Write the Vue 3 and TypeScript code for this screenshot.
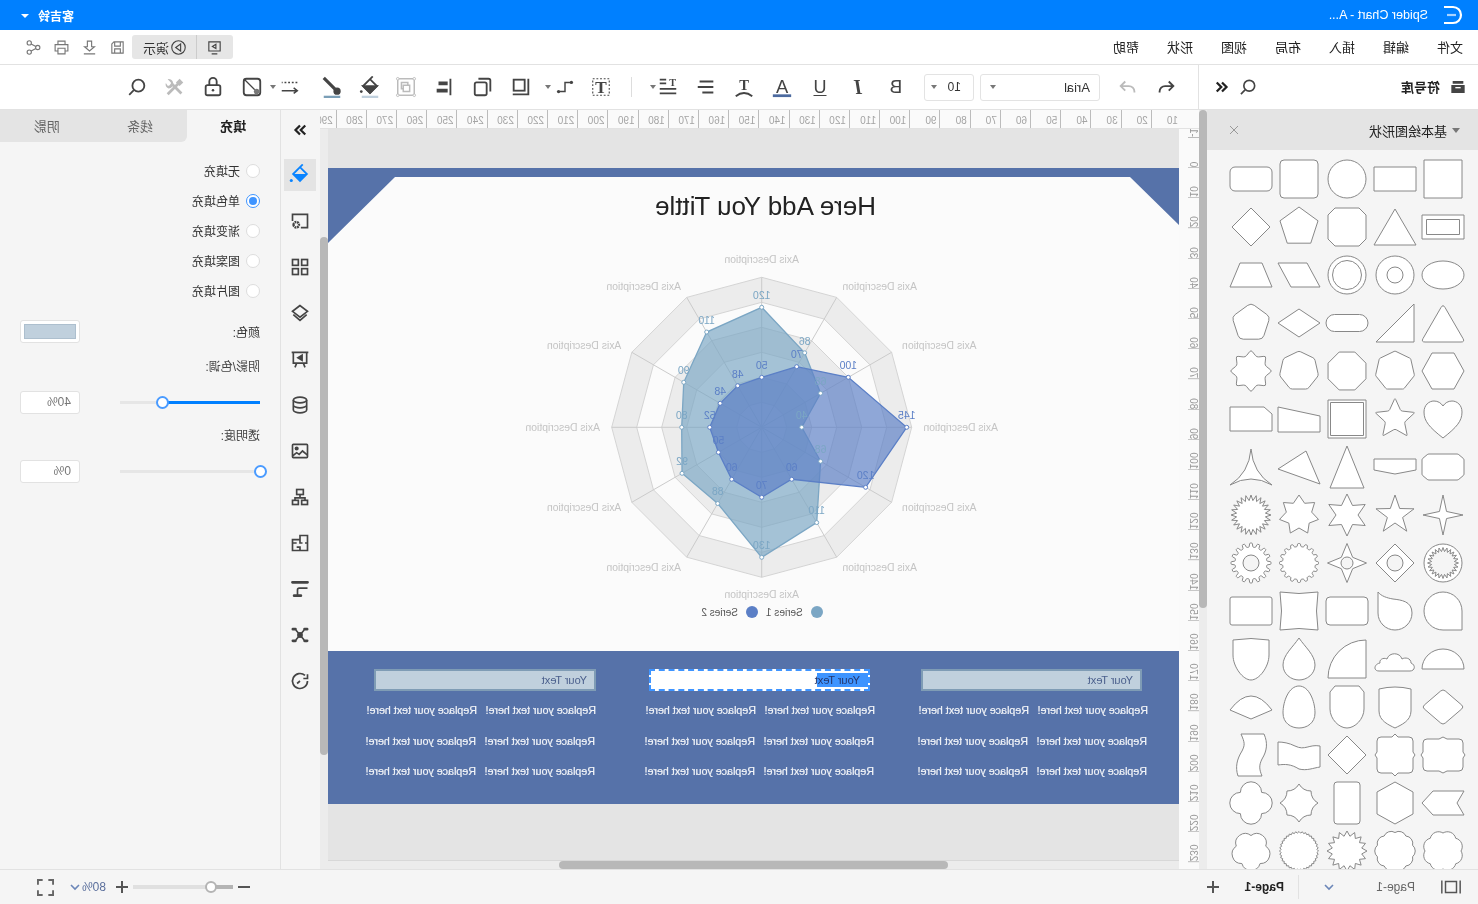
<script setup lang="ts">
import { computed } from 'vue'

// the reference is a flipped capture, so the whole app is laid out normally and flipped in css
type Pt = [number, number]

const f = (n: number) => Math.round(n * 100) / 100
const poly = (pts: Pt[]) => 'M' + pts.map(p => `${f(p[0])} ${f(p[1])}`).join('L') + 'Z'
const rect = (w: number, h: number, r = 0) => {
  const x = 24 - w / 2, y = 24 - h / 2
  if (!r) return `M${x} ${y}h${w}v${h}h${-w}Z`
  return `M${x + r} ${y}h${w - 2 * r}a${r} ${r} 0 0 1 ${r} ${r}v${h - 2 * r}a${r} ${r} 0 0 1 ${-r} ${r}h${2 * r - w}a${r} ${r} 0 0 1 ${-r} ${-r}v${2 * r - h}a${r} ${r} 0 0 1 ${r} ${-r}Z`
}
const ell = (rx: number, ry = rx) => `M${24 - rx} 24a${rx} ${ry} 0 1 0 ${2 * rx} 0a${rx} ${ry} 0 1 0 ${-2 * rx} 0Z`
const ngonPts = (n: number, r: number, rot = 0): Pt[] =>
  Array.from({ length: n }, (_, i) => {
    const a = ((rot + (360 * i) / n - 90) * Math.PI) / 180
    return [24 + r * Math.cos(a), 24 + r * Math.sin(a)] as Pt
  })
const ngon = (n: number, r: number, rot = 0) => poly(ngonPts(n, r, rot))
const starPts = (n: number, a: number, b: number): Pt[] =>
  Array.from({ length: n * 2 }, (_, i) => {
    const t = (Math.PI * i) / n - Math.PI / 2
    const r = i % 2 ? b : a
    return [24 + r * Math.cos(t), 24 + r * Math.sin(t)] as Pt
  })
const star = (n: number, a: number, b: number) => poly(starPts(n, a, b))
const roundPoly = (pts: Pt[], r: number) => {
  let d = ''
  pts.forEach((p, i) => {
    const a = pts[(i + pts.length - 1) % pts.length], b = pts[(i + 1) % pts.length]
    const la = Math.hypot(a[0] - p[0], a[1] - p[1]), lb = Math.hypot(b[0] - p[0], b[1] - p[1])
    const s: Pt = [p[0] + ((a[0] - p[0]) * r) / la, p[1] + ((a[1] - p[1]) * r) / la]
    const e: Pt = [p[0] + ((b[0] - p[0]) * r) / lb, p[1] + ((b[1] - p[1]) * r) / lb]
    d += `${i ? 'L' : 'M'}${f(s[0])} ${f(s[1])}Q${f(p[0])} ${f(p[1])} ${f(e[0])} ${f(e[1])}`
  })
  return d + 'Z'
}
const gear = (n: number, a: number, b: number) => {
  const pts: Pt[] = []
  for (let i = 0; i < n; i++) {
    const s = (2 * Math.PI) / n, t = s * i - Math.PI / 2
    for (const [k, r] of [[-0.3, b], [-0.16, a], [0.16, a], [0.3, b]] as Pt[]) {
      pts.push([24 + r * Math.cos(t + k * s), 24 + r * Math.sin(t + k * s)])
    }
  }
  return roundPoly(pts, 0.6)
}
const flower = (n: number, r: number, lobe: number, rot = 0) => {
  const pts = ngonPts(n, r, rot)
  return `M${f(pts[0][0])} ${f(pts[0][1])}` + pts.map((_, i) => {
    const p = pts[(i + 1) % n]
    return `A${lobe} ${lobe} 0 0 1 ${f(p[0])} ${f(p[1])}`
  }).join('') + 'Z'
}

const shapes: string[] = [
  rect(38, 38), rect(42, 24), ell(19), rect(38, 38, 4), rect(42, 24, 5),
  rect(42, 24) + rect(33, 15), poly([[24, 6], [45, 42], [3, 42]]), poly([[12, 5], [36, 5], [43, 12], [43, 36], [36, 43], [12, 43], [5, 36], [5, 12]]), ngon(5, 20), poly([[24, 5], [43, 24], [24, 43], [5, 24]]),
  ell(21, 14), ell(19) + ell(8), ell(19) + ell(14.5), poly([[16, 12], [45, 12], [32, 36], [3, 36]]), poly([[13, 12], [35, 12], [45, 36], [3, 36]]),
  roundPoly([[24, 5], [46, 43], [2, 43]], 4), poly([[5, 5], [5, 43], [43, 43]]), rect(42, 17, 8.5), poly([[24, 10], [45, 24], [24, 38], [3, 24]]), roundPoly(ngonPts(5, 20), 4),
  poly([[13, 6], [35, 6], [45, 24], [35, 42], [13, 42], [3, 24]]), roundPoly(ngonPts(7, 20), 1), ngon(8, 20.5, 22.5), roundPoly(ngonPts(7, 20), 2), roundPoly(starPts(8, 21, 15), 2),
  'M24 43C10 32 5 26 5 17C5 10 10 6 15 6C19 6 22 8 24 11C26 8 29 6 33 6C38 6 43 10 43 17C43 26 38 32 24 43Z', roundPoly(starPts(5, 21, 10), 1.5), rect(38, 38) + rect(33, 33), poly([[3, 21], [45, 12], [45, 37], [3, 37]]), poly([[3, 19], [11, 12], [45, 12], [45, 36], [3, 36]]),
  roundPoly([[9, 11], [39, 11], [45, 16], [45, 32], [39, 37], [9, 37], [3, 32], [3, 16]], 1), poly([[3, 16], [45, 16], [45, 27], [24, 31], [3, 27]]), poly([[24, 3], [41, 45], [7, 45]]), poly([[45, 26], [17, 8], [3, 41]]), 'M24 6Q26 30 45 42Q24 30 3 42Q22 30 24 6Z',
  star(4, 20, 5), star(5, 20, 8), star(6, 21, 11), star(7, 20, 13), star(24, 20, 14.5),
  ell(19) + star(24, 15.5, 11.5), poly([[24, 5], [43, 24], [24, 43], [5, 24]]) + ell(8), star(4, 19.5, 8) + ell(6), gear(16, 19.5, 16.5), gear(16, 20, 16) + ell(8),
  'M5 43V24A19 19 0 1 1 24 43Z', 'M41 5V26A17 17 0 1 1 7 26C7 14 18 13 26 12C32 11 38 9 41 5Z', rect(42, 28, 4), 'M5 5Q24 8 43 5Q40 24 43 43Q24 40 5 43Q8 24 5 5Z', rect(42, 28, 2),
  'M3 34A21 20 0 0 1 45 34Z', 'M9 36C4 36 3 30 8 28C8 23 14 22 17 24C19 17 30 17 32 24C36 22 40 25 39 28C45 29 46 36 40 36Z', 'M5 43V5A38 38 0 0 1 43 43Z', 'M24 3C30 12 40 20 40 30C40 39 32 45 24 45C16 45 8 39 8 30C8 20 18 12 24 3Z', 'M6 5Q24 2 42 5V20C42 32 32 45 24 45C16 45 6 32 6 20Z',
  roundPoly([[24, 6], [45, 24], [24, 42], [3, 24]], 3), 'M8 6Q24 2 40 6V28C40 38 30 42 24 45C18 42 8 38 8 28Z', 'M12 3H36L41 9V26C41 36 32 45 24 45C16 45 7 36 7 26V9Z', 'M24 3C34 3 40 18 40 30C40 40 32 45 24 45C16 45 8 40 8 30C8 18 14 3 24 3Z', 'M3 27Q24 -1 45 27L24 36Z',
  'M8 8H20L24 6L28 8H40Q44 8 44 12V21L46 24L44 27V36Q44 40 40 40H28L24 42L20 40H8Q4 40 4 36V27L2 24L4 21V12Q4 8 8 8Z', 'M10 6H21L24 3L27 6H38Q42 6 42 10V21L44 24L42 27V38Q42 42 38 42H27L24 45L21 42H10Q6 42 6 38V27L4 24L6 21V10Q6 6 10 6Z', poly([[24, 5], [43, 24], [24, 43], [5, 24]]), 'M3 15C14 13 18 20 28 15C34 12 40 11 45 11V34C38 33 32 33 24 38C16 40 10 37 3 36Z', 'M11 3H34C30 12 30 14 33 20C38 28 40 36 37 45H13C16 38 16 34 13 28C8 20 7 12 11 3Z',
  poly([[45, 24], [34, 12], [3, 12], [10, 24], [3, 36], [34, 36]]), poly([[24, 3], [42, 13], [42, 35], [24, 45], [6, 35], [6, 13]]), rect(26, 42, 3), 'M24 5Q28 12 36 12Q36 20 43 24Q36 28 36 36Q28 36 24 43Q20 36 12 36Q12 28 5 24Q12 20 12 12Q20 12 24 5Z', flower(4, 15, 9.5, 45),
  flower(8, 18, 8.5), flower(10, 18.5, 7.5), star(16, 20, 15), star(36, 19.5, 18), flower(5, 15.5, 9.5),
]

const hTicks = Array.from({ length: 29 }, (_, i) => (i + 1) * 10)
const vTicks = Array.from({ length: 24 }, (_, i) => i * 10)

// chart geometry, one value unit is one pixel
const cx = 417.3
const cy = 203.3
const axisN = 12
const pt = (i: number, r: number): Pt => {
  const a = (i * 2 * Math.PI) / axisN
  return [cx - r * Math.sin(a), cy - r * Math.cos(a)]
}
const ring = (r: number) => Array.from({ length: axisN }, (_, i) => pt(i, r).map(f).join(',')).join(' ')
const rings = [150, 125, 100, 75, 50, 25].map((r, i) => ({ r, pts: ring(r), fill: i % 2 ? '#fbfbfb' : '#ececec' }))
const spokes = Array.from({ length: axisN }, (_, i) => pt(i, 150))
const axisLabels: { x: number; y: number }[] = [
  [0, -167], [118, -140], [177.6, -80.6], [199, 1], [177.6, 81.4], [118, 141.4],
  [0, 168], [-118, 141.4], [-177.6, 81.4], [-199, 1], [-177.6, -80.6], [-118, -140],
].map(([dx, dy]) => ({ x: cx - dx, y: cy + dy }))

const seriesData = [
  { name: 'Series 1', color: '#7ba6c4', values: [120, 86, 68, 40, 68, 110, 130, 88, 92, 80, 90, 110] },
  { name: 'Series 2', color: '#5b7fc6', values: [50, 70, 100, 145, 120, 60, 70, 60, 50, 52, 48, 48] },
]
const series = computed(() =>
  seriesData.map(s => {
    const points = s.values.map((v, i) => {
      const [x, y] = pt(i, v)
      return { x, y, v }
    })
    return { ...s, points, path: points.map(p => `${f(p.x)},${f(p.y)}`).join(' ') }
  })
)

const fills = [
  { label: '无填充', on: false },
  { label: '单色填充', on: true },
  { label: '渐变填充', on: false },
  { label: '图案填充', on: false },
  { label: '图片填充', on: false },
]
const menus = ['文件', '编辑', '插入', '布局', '视图', '形状', '帮助']
const blocks = [
  { cls: 'blk-a', selected: false },
  { cls: 'blk-b', selected: true },
  { cls: 'blk-c', selected: false },
]
const placeholder = 'Replace your text here!'
</script>

<template>
  <div class="app">
    <header class="titlebar">
      <svg class="logo" viewBox="0 0 20 20"><path d="M19 2H10a8 8 0 0 0 0 16h9" /><path d="M7 10h9" class="logo-mid" /></svg>
      <span class="doc-title">Spider Chart - A...</span>
      <span class="user">客吉铃</span>
      <i class="user-caret"></i>
    </header>

    <nav class="menubar">
      <span v-for="m in menus" :key="m" class="menu">{{ m }}</span>
      <div class="pill">
        <span class="pill-a">
          <svg class="ic ic-s" viewBox="0 0 24 24"><path d="M4 4h16v13H4zM8 21h8" /><path d="M10 7.5l5 3-5 3z" /></svg>
        </span>
        <span class="pill-b">
          <svg class="ic ic-s" viewBox="0 0 24 24"><circle cx="12" cy="12" r="9.5" /><path d="M9 7l7 5-7 5z" /></svg>
          演示
        </span>
      </div>
      <span class="mini"><svg class="ic ic-s grey" viewBox="0 0 24 24"><path d="M4 4h13l3 3v13H4zM8 4v6h8V4M8 20v-6h8v6" /></svg></span>
      <span class="mini"><svg class="ic ic-s grey" viewBox="0 0 24 24"><path d="M9 3h6v8h4l-7 6-7-6h4zM4 21h16" /></svg></span>
      <span class="mini"><svg class="ic ic-s grey" viewBox="0 0 24 24"><path d="M7 8V3h10v5M7 17H3V8h18v9h-4M7 13h10v8H7z" /></svg></span>
      <span class="mini"><svg class="ic ic-s grey" viewBox="0 0 24 24"><circle cx="6" cy="12" r="3" /><circle cx="18" cy="5.5" r="3" /><circle cx="18" cy="18.5" r="3" /><path d="M8.7 10.6l6.6-3.7M8.7 13.4l6.6 3.7" /></svg></span>
    </nav>

    <div class="toolbar">
      <div class="lib-head">
        <svg class="solid lib-ic" viewBox="0 0 24 24"><path d="M4 3h16v4H4zM2 9h20v12H2z" /><path d="M8 12h8v2H8z" fill="#fff" /></svg>
        <b class="lib-title">符号库</b>
        <svg class="ic search-a" viewBox="0 0 24 24"><circle cx="10.5" cy="10.5" r="6.5" /><path d="M15.5 15.5l5 5" /></svg>
        <svg class="ic dbl" viewBox="0 0 24 24"><path d="M12 6l-6 6 6 6M19 6l-6 6 6 6" /></svg>
      </div>
      <span class="tb undo"><svg class="ic" viewBox="0 0 24 24"><path d="M9 6l-5 5 5 5M4 11h9a6 6 0 0 1 6 6v1" /></svg></span>
      <span class="tb"><svg class="ic light" viewBox="0 0 24 24"><path d="M15 6l5 5-5 5M20 11h-9a6 6 0 0 0-6 6v1" /></svg></span>
      <div class="select font-sel"><span>Arial</span><i class="caret"></i></div>
      <div class="select size-sel"><span>10</span><i class="caret"></i></div>
      <span class="tb glyph bold-b">B</span>
      <span class="tb glyph ital">I</span>
      <span class="tb glyph under">U</span>
      <span class="tb">
        <svg class="ic" viewBox="0 0 24 24"><text x="12" y="18" class="svg-t sans">A</text><path d="M2 21.5h20" class="line-blue" /></svg>
      </span>
      <span class="tb">
        <svg class="ic" viewBox="0 0 24 24"><text x="12" y="15" class="svg-t slab">T</text><path d="M3 22q9-7 18 0" /></svg>
      </span>
      <span class="tb"><svg class="ic" viewBox="0 0 24 24"><path d="M4 6h15M4 12h17M4 18h12" /></svg></span>
      <span class="tb">
        <svg class="ic" viewBox="0 0 24 24"><text x="7" y="11" class="svg-t slab-s">T</text><path d="M14 4h7M14 8h7M3 14h18M3 19h18" /></svg>
        <i class="caret tb-caret near"></i>
      </span>
      <i class="tb-div"></i>
      <span class="tb">
        <svg class="ic" viewBox="0 0 24 24"><rect x="3" y="3" width="18" height="18" class="dash" /><text x="12" y="18" class="svg-t slab-m">T</text></svg>
      </span>
      <span class="tb tb-conn">
        <svg class="ic thin" viewBox="0 0 24 24"><path d="M6 7h6v10h6" /><circle cx="5" cy="7" r="1.8" class="dot" /><circle cx="19" cy="17" r="1.8" class="dot" /></svg>
        <i class="caret tb-caret"></i>
      </span>
      <span class="tb tb-front"><svg class="ic" viewBox="0 0 24 24"><path d="M4 3v17h17" /><rect x="8" y="4" width="12" height="12" /></svg></span>
      <span class="tb"><svg class="ic" viewBox="0 0 24 24"><path d="M4 17V5a2 2 0 0 1 2-2h11" /><rect x="8" y="7" width="13" height="14" rx="2" /></svg></span>
      <span class="tb tb-alignl"><svg class="solid" viewBox="0 0 24 24"><path d="M4 3h2v18H4zM8 6h10v4H8zM8 14h12v4H8z" /></svg></span>
      <span class="tb">
        <svg class="ic light thin" viewBox="0 0 24 24"><rect x="3" y="3" width="18" height="18" /><circle cx="3" cy="3" r="1.4" class="pale-dot" /><circle cx="21" cy="3" r="1.4" class="pale-dot" /><circle cx="3" cy="21" r="1.4" class="pale-dot" /><circle cx="21" cy="21" r="1.4" class="pale-dot" /><path d="M8 10v7h7v-7zM10 10V7h7v7h-2" /></svg>
      </span>
      <span class="tb tb-bucket">
        <svg class="ic" viewBox="0 0 24 24"><path d="M12 3.5l7.5 7.5-7.5 7.500L4.500 11zM12 3.5L9 .5" /><path d="M4.500 11h15l-7.500 7.500z" class="dark-fill" /><circle cx="21.500" cy="17" r="1.500" class="dot" /><path d="M3 23h18" class="line-pale" /></svg>
      </span>
      <span class="tb">
        <svg class="ic" viewBox="0 0 24 24"><path d="M21 2L9 14" class="brush" /><circle cx="6.500" cy="16.500" r="3" class="dark-fill" /><path d="M3 23h18" class="line-teal" /></svg>
      </span>
      <span class="tb tb-line">
        <svg class="ic thin" viewBox="0 0 24 24"><path d="M4 7h17" class="dots" /><path d="M21 16H4M8 13l-4 3 4 3" /></svg>
        <i class="caret tb-caret"></i>
      </span>
      <span class="tb"><svg class="ic" viewBox="0 0 24 24"><rect x="3" y="3" width="18" height="18" rx="3" /><path d="M21 3L9 15" class="thin-l" /><circle cx="7" cy="17" r="3" class="grey-fill" /></svg></span>
      <span class="tb tb-lock"><svg class="ic" viewBox="0 0 24 24"><rect x="4" y="10" width="16" height="11" rx="2" /><path d="M8 10V6a4 4 0 0 1 8 0v4" /><circle cx="12" cy="15.500" r="1.400" class="dot" /></svg></span>
      <span class="tb">
        <svg class="ic light" viewBox="0 0 24 24"><path d="M8 8l12 12M5 19L15 9" class="tool-bar" /><path d="M3 7l4-4 4 4-4 4z" class="pale-fill" /><path d="M20 3.500l-3.500 3.500 0 1.500 2 2 1.500 0 2-3a5 5 0 0 1-3 6 5 5 0 0 1-5-6 5 5 0 0 1 6-4z" class="pale-fill" /></svg>
      </span>
      <span class="tb"><svg class="ic" viewBox="0 0 24 24"><circle cx="10.500" cy="10.500" r="6.500" /><path d="M15.500 15.500l5 5" /></svg></span>
    </div>

    <div class="body">
      <aside class="library">
        <div class="lib-bar">
          <i class="caret lib-caret"></i>
          <span>基本绘图形状</span>
          <svg class="lib-x" viewBox="0 0 10 10"><path d="M1 1l8 8M9 1l-8 8" /></svg>
        </div>
        <div class="shape-grid">
          <svg v-for="(d, i) in shapes" :key="i" class="shape" viewBox="0 0 48 48"><path :d="d" /></svg>
        </div>
      </aside>
      <div class="lib-scroll"><i class="lib-thumb"></i></div>

      <main class="center">
        <div class="hruler">
          <i class="corner"></i>
          <span v-for="t in hTicks" :key="t" class="htick">{{ t }}</span>
        </div>
        <div class="work">
          <div class="vruler">
            <div class="vstart"><span>-1</span></div>
            <div v-for="t in vTicks" :key="t" class="vtick"><span>{{ t }}</span></div>
          </div>
          <div class="canvas">
            <section class="page">
              <div class="page-top">
                <svg class="page-deco" viewBox="0 0 851 80"><polygon points="0,0 851,0 851,75 784,9 49,9 0,57" /></svg>
                <h1 class="page-title">Here Add You Tittle</h1>
                <svg class="chart" width="851" height="427" viewBox="0 0 851 427">
                  <polygon v-for="r in rings" :key="r.r" :points="r.pts" :fill="r.fill" class="ring" />
                  <line v-for="(s, i) in spokes" :key="i" :x1="cx" :y1="cy" :x2="s[0]" :y2="s[1]" class="spoke" />
                  <text v-for="(a, i) in axisLabels" :key="i" :x="a.x" :y="a.y" class="axis-label">Axis Description</text>
                  <g v-for="s in series" :key="s.name">
                    <polygon :points="s.path" :fill="s.color" :stroke="s.color" fill-opacity="0.68" stroke-width="1.3" />
                  </g>
                  <g v-for="s in series" :key="s.name + 'p'">
                    <circle v-for="(p, i) in s.points" :key="i" :cx="p.x" :cy="p.y" r="2" fill="#fff" :stroke="s.color" />
                    <text v-for="(p, i) in s.points" :key="'t' + i" :x="p.x" :y="p.y - 11" :fill="s.color" class="val">{{ p.v }}</text>
                  </g>
                </svg>
                <div class="legend">
                  <span v-for="s in seriesData" :key="s.name" class="leg"><i :style="{ background: s.color }"></i>{{ s.name }}</span>
                </div>
              </div>
              <div class="page-foot">
                <div v-for="b in blocks" :key="b.cls" class="blk" :class="b.cls">
                  <div class="blk-box" :class="{ 'is-sel': b.selected }"><span>Your Text</span></div>
                  <div v-for="n in 3" :key="n" class="blk-row" :class="{ shift: n > 1 }">
                    <span>{{ placeholder }}</span><span>{{ placeholder }}</span>
                  </div>
                </div>
              </div>
            </section>
            <div class="hscroll"><i></i></div>
          </div>
          <div class="vscroll"><i></i></div>
        </div>
      </main>

      <div class="rail">
        <span class="rail-btn top"><svg class="ic dbl" viewBox="0 0 24 24"><path d="M5 6l6 6-6 6M12 6l6 6-6 6" /></svg></span>
        <span class="rail-btn active">
          <svg class="ic blue" viewBox="0 0 24 24"><path d="M12 3.500l7.500 7.500-7.500 7.500L4.500 11zM12 3.500L9 .5" /><path d="M4.500 11h15l-7.500 7.500z" class="blue-fill" /><circle cx="21.500" cy="18" r="1.700" class="blue-fill" /></svg>
        </span>
        <span class="rail-btn"><svg class="ic" viewBox="0 0 24 24"><path d="M11 20H3V4h18v8" /><circle cx="16.500" cy="16.500" r="3.300" class="gearc" /></svg></span>
        <span class="rail-btn"><svg class="ic" viewBox="0 0 24 24"><rect x="3" y="3" width="7" height="7" /><rect x="14" y="3" width="7" height="7" /><rect x="3" y="14" width="7" height="7" /><rect x="14" y="14" width="7" height="7" /></svg></span>
        <span class="rail-btn"><svg class="ic" viewBox="0 0 24 24"><path d="M12 3l9 7-9 7-9-7zM4 14l8 7 8-7" /></svg></span>
        <span class="rail-btn"><svg class="ic" viewBox="0 0 24 24"><path d="M2 4h20M4 4v13h16V4M8 17l-2 5M16 17l2 5" /><path d="M9.500 7.500l5 3-5 3z" class="dark-fill" /></svg></span>
        <span class="rail-btn"><svg class="ic" viewBox="0 0 24 24"><ellipse cx="12" cy="6" rx="8" ry="3.500" /><path d="M4 6v12c0 2 4 3.500 8 3.500s8-1.500 8-3.500V6M4 12c0 2 4 3.500 8 3.500s8-1.500 8-3.500" /></svg></span>
        <span class="rail-btn"><svg class="ic" viewBox="0 0 24 24"><rect x="3" y="4" width="18" height="16" rx="1" /><circle cx="16" cy="9" r="1.500" class="dark-fill" /><path d="M3 17l6-5 4 4 3-2 5 4" /></svg></span>
        <span class="rail-btn"><svg class="ic" viewBox="0 0 24 24"><rect x="8" y="3" width="8" height="6" /><rect x="3" y="16" width="7" height="5" /><rect x="14" y="16" width="7" height="5" /><path d="M12 9v4M6 16v-3h12v3" /></svg></span>
        <span class="rail-btn"><svg class="ic" viewBox="0 0 24 24"><path d="M3 3h9v5h9v13H3zM12 8v4h-3M3 12h3M12 21v-4h4M16 12h5" /></svg></span>
        <span class="rail-btn"><svg class="ic" viewBox="0 0 24 24"><path d="M3 4h18M11 20h8" class="heavy-l" /><path d="M3 11h10a2 2 0 0 1 2 2v7" /></svg></span>
        <span class="rail-btn"><svg class="ic" viewBox="0 0 24 24"><path d="M7 6l10 12M17 6L7 18" /><circle cx="12" cy="12" r="2.500" class="dark-fill" /><path d="M3.500 5h3M17.500 5h3M3.500 19h3M17.500 19h3" class="heavy-l" /></svg></span>
        <span class="rail-btn"><svg class="ic" viewBox="0 0 24 24"><path d="M3 12a9 9 0 1 0 3-6.700M3 4v5h5M12 12l3.500 3" /></svg></span>
      </div>

      <aside class="props">
        <div class="tabs">
          <span class="tab on">填充</span>
          <span class="tab mid">线条</span>
          <span class="tab">阴影</span>
        </div>
        <div class="fill-list">
          <label v-for="o in fills" :key="o.label" class="radio-row">
            <i class="radio" :class="{ on: o.on }"></i>{{ o.label }}
          </label>
        </div>
        <div class="prop-row color-row">
          <span>颜色:</span>
          <span class="swatch"><i></i></span>
        </div>
        <div class="prop-label l-a">阴影/色调:</div>
        <div class="prop-row slider-row">
          <div class="slider"><i class="fillbar" :style="{ width: '98px' }"></i><i class="knob" :style="{ left: '98px' }"></i></div>
          <span class="num">40%</span>
        </div>
        <div class="prop-label l-b">透明度:</div>
        <div class="prop-row slider-row">
          <div class="slider"><i class="knob" :style="{ left: '0px' }"></i></div>
          <span class="num">0%</span>
        </div>
      </aside>
    </div>

    <footer class="status">
      <svg class="ic thin st-pages" viewBox="0 0 24 24"><path d="M2 5v14M22 5v14M6 6h12v12H6z" /></svg>
      <span class="st-page">Page-1</span>
      <svg class="ic thin st-chev" viewBox="0 0 12 12"><path d="M2 4l4 4 4-4" /></svg>
      <i class="st-div"></i>
      <b class="st-cur">Page-1</b>
      <svg class="ic st-plus" viewBox="0 0 14 14"><path d="M7 1v12M1 7h12" /></svg>
      <svg class="ic st-minus" viewBox="0 0 14 14"><path d="M1 7h12" /></svg>
      <div class="zoom-track"><i class="zoom-dark"></i><i class="zoom-knob"></i></div>
      <svg class="ic st-plus2" viewBox="0 0 14 14"><path d="M7 1v12M1 7h12" /></svg>
      <span class="st-zoom">80%</span>
      <svg class="ic thin st-chev2" viewBox="0 0 12 12"><path d="M2 4l4 4 4-4" /></svg>
      <svg class="ic st-full" viewBox="0 0 18 18"><path d="M1 6V1h5M12 1h5v5M17 12v5h-5M6 17H1v-5" /></svg>
    </footer>
  </div>
</template>

<style scoped>
.app {
  width: 1478px;
  height: 904px;
  overflow: hidden;
  display: flex;
  flex-direction: column;
  background: #fff;
  transform: scaleX(-1);
  font-family: "Liberation Sans", "Noto Sans CJK SC", sans-serif;
  font-size: 12px;
  color: #333;
}
i { display: block; font-style: normal; }

.ic { width: 24px; height: 24px; fill: none; stroke: #444; stroke-width: 2; flex: none; display: block; }
.ic-s { width: 17px; height: 17px; stroke-width: 1.6; }
.ic.grey { stroke: #777; }
.ic.light { stroke: #bbb; }
.ic.thin { stroke-width: 1.6; }
.ic.blue { stroke: #0a84ff; }
.solid { width: 24px; height: 24px; fill: #444; display: block; flex: none; }
.dot { fill: #444; stroke: none; }
.dark-fill { fill: #444; stroke: #444; }
.grey-fill { fill: #777; stroke: none; }
.blue-fill { fill: #0a84ff; stroke: none; }
.pale-dot { fill: #fff; stroke: #bbb; stroke-width: 1; }
.pale-fill { fill: #bbb; stroke: none; }
.tool-bar { stroke-width: 3; }
.dash { stroke-dasharray: 2 2; stroke-width: 1.2; }
.dots { stroke-dasharray: 2 2; }
.brush { stroke-width: 3.4; }
.thin-l { stroke-width: 1.3; }
.heavy-l { stroke-width: 3.4; stroke-linecap: round; }
.gearc { stroke-width: 2.8; stroke-dasharray: 2.200 .8; }
.line-blue { stroke: #4c6a9f; stroke-width: 3; }
.line-pale { stroke: #c0d0dd; stroke-width: 3; }
.line-teal { stroke: #7b9fb7; stroke-width: 3; }
.svg-t { fill: #444; stroke: none; text-anchor: middle; }
.svg-t.sans { font: 20px "Liberation Sans", sans-serif; }
.svg-t.slab { font: bold 16px "Liberation Serif", serif; }
.svg-t.slab-s { font: bold 11px "Liberation Serif", serif; }
.svg-t.slab-m { font: bold 19px "Liberation Serif", serif; }

.titlebar {
  height: 30px;
  flex: none;
  background: #0080ff;
  color: #fff;
  display: flex;
  align-items: center;
  padding-left: 15px;
}
.logo { width: 20px; height: 20px; fill: none; stroke: #fff; stroke-width: 2.2; }
.logo-mid { stroke: #a8d3ff; }
.doc-title { margin-left: 15px; font-size: 12.5px; }
.user { margin-left: auto; font-size: 12px; font-weight: 700; }
.user-caret {
  margin: 2px 21px 0 9px;
  border-left: 4px solid transparent;
  border-right: 4px solid transparent;
  border-top: 4px solid #fff;
}

.menubar {
  height: 35px;
  flex: none;
  box-sizing: border-box;
  border-bottom: 1px solid #e2e2e2;
  display: flex;
  align-items: center;
  padding: 0 20px 0 15px;
  gap: 28px;
  font-size: 13px;
}
.menu { color: #222; margin-top: -2px; }
.pill {
  margin-left: auto;
  margin-right: -28px;
  width: 101px;
  height: 24px;
  background: #e6e6e6;
  border-radius: 3px;
  display: flex;
  align-items: center;
  font-size: 13px;
}
.pill-a { width: 36px; height: 24px; border-right: 1px solid #ccc; display: flex; align-items: center; justify-content: center; flex: none; }
.pill-b { flex: 1; display: flex; align-items: center; gap: 1px; padding-left: 9px; white-space: nowrap; }
.mini { width: 28px; margin-right: -28px; display: flex; justify-content: center; }
.mini:last-child { margin-right: 0; }

.toolbar {
  height: 45px;
  flex: none;
  box-sizing: border-box;
  border-bottom: 1px solid #e2e2e2;
  display: flex;
  align-items: center;
}
.lib-head {
  width: 280px;
  height: 100%;
  box-sizing: border-box;
  border-right: 1px solid #e2e2e2;
  display: flex;
  align-items: center;
  padding-left: 12px;
  margin-right: 13px;
  flex: none;
}
.lib-ic { width: 16px; height: 16px; }
.lib-title { margin: -2px 0 0 10px; font-size: 13px; color: #222; }
.search-a { margin-left: 143px; width: 20px; height: 20px; }
.dbl { margin-left: 7px; width: 18px; height: 18px; stroke: #222; stroke-width: 3; }
.tb { width: 38px; height: 28px; flex: none; position: relative; display: flex; align-items: center; justify-content: center; }
.tb .ic, .tb .solid { width: 22px; height: 22px; }
.glyph { font-size: 19px; color: #444; }
.bold-b { margin-left: 9px; }
.ital { font-family: "Liberation Serif", serif; font-style: italic; font-size: 20px; font-weight: 700; }
.under { text-decoration: underline; text-underline-offset: 2px; font-size: 18px; }
.select {
  box-sizing: border-box;
  height: 27px;
  border: 1px solid #e3e3e3;
  border-radius: 3px;
  display: flex;
  align-items: center;
  justify-content: space-between;
  padding: 0 9px;
  color: #333;
}
.font-sel { width: 120px; margin-left: 9px; font-size: 13px; }
.size-sel { width: 50px; margin-left: 6px; padding: 0 6px 0 12px; }
.caret {
  border-left: 3.5px solid transparent;
  border-right: 3.5px solid transparent;
  border-top: 4px solid #777;
  width: 0;
  height: 0;
}
.tb-caret { position: absolute; right: -1px; top: 12px; }
.tb-caret.near { right: 1px; }
.tb-div { width: 1px; height: 20px; background: #ddd; margin: 0 11px 0 17px; flex: none; }
.tb-conn { margin-left: -2px; }
.tb-front { margin-left: 6px; }
.tb-alignl { margin-left: 1px; }
.tb-bucket { margin-left: -2px; }
.tb-line { margin-left: 4px; }
.tb-lock { margin-left: 1px; }

.body { flex: 1; min-height: 0; display: flex; }

.library { width: 271px; flex: none; background: #f5f5f5; overflow: hidden; }
.lib-bar {
  height: 40px;
  background: #e4e4e4;
  display: flex;
  align-items: center;
  font-size: 13px;
  color: #222;
}
.lib-caret { margin: 0 5px 0 18px; border-left-width: 4.5px; border-right-width: 4.5px; border-top-width: 5px; }
.lib-x { width: 10px; height: 10px; margin-left: 130px; fill: none; stroke: #999; stroke-width: 1; }
.shape-grid {
  display: grid;
  grid-template-columns: repeat(5, 48px);
  grid-auto-rows: 48px;
  padding: 5px 0 0 11px;
}
.shape { width: 48px; height: 48px; display: block; }
.shape path { fill: #fff; stroke: #888; stroke-width: 1; fill-rule: nonzero; }

.lib-scroll { width: 8px; flex: none; background: #ececec; }
.lib-thumb { height: 498px; background: #b8b8b8; border-radius: 4px; }

.center { flex: 1; min-width: 0; display: flex; flex-direction: column; }
.hruler {
  height: 19px;
  flex: none;
  box-sizing: border-box;
  display: flex;
  background: #fafafa;
  overflow: hidden;
  border-bottom: 1px solid #e2e2e2;
}
.corner { width: 17px; flex: none; }
.htick {
  width: 30.2px;
  flex: none;
  box-sizing: border-box;
  padding: 5px 0 0 3px;
  border-left: 1px solid #bcbcbc;
  font-size: 10px;
  color: #a4a4a4;
}
.htick:first-of-type { border-left: none; padding-left: 4px; }
.work { flex: 1; min-height: 0; display: flex; }
.vruler { width: 20px; flex: none; background: #fafafa; overflow: hidden; }
.vstart { height: 9px; }
.vstart, .vtick { display: flex; justify-content: flex-start; overflow: hidden; }
.vtick { height: 30.2px; }
.vstart span, .vtick span {
  width: 11px;
  box-sizing: border-box;
  writing-mode: vertical-rl;
  transform: rotate(180deg);
  border-top: 1px solid #bcbcbc;
  font-size: 10px;
  line-height: 11px;
  color: #999;
  text-align: left;
}
.canvas {
  width: 851px;
  flex: none;
  background: #e4e4e4;
  position: relative;
  overflow: hidden;
  padding-top: 39px;
  box-sizing: border-box;
}
.page { width: 851px; height: 636px; display: flex; flex-direction: column; }
.page-top { height: 483px; background: #fbfbfb; position: relative; flex: none; }
.page-deco { position: absolute; left: 0; top: 0; width: 851px; height: 80px; fill: #5672a9; }
.page-title {
  position: relative;
  margin: 0;
  padding: 20px 24px 0 0;
  height: 36px;
  line-height: 36px;
  font-size: 26px;
  font-weight: 400;
  text-align: center;
  color: #222;
}
.chart { display: block; position: relative; filter: blur(0.25px); }
.ring { stroke: #d4d4d4; stroke-width: 1; }
.spoke { stroke: #cbcbcb; stroke-width: 1; }
.axis-label { font-size: 10.4px; fill: #c4c4c4; text-anchor: middle; dominant-baseline: middle; }
.val { font-size: 10.5px; text-anchor: middle; dominant-baseline: middle; }
.legend {
  position: absolute;
  left: 0;
  right: 0;
  top: 438px;
  display: flex;
  justify-content: center;
  gap: 8px;
  padding-right: 17px;
  font-size: 10px;
  color: #555;
}
.leg { display: flex; align-items: center; gap: 8px; }
.leg i { width: 12px; height: 12px; border-radius: 50%; }
.page-foot {
  flex: 1;
  background: #5672a9;
  display: flex;
  padding: 18px 0 0 31px;
}
.blk { width: 229px; flex: none; }
.blk-b { margin-left: 44px; }
.blk-c { margin-left: 50px; }
.blk-box {
  box-sizing: border-box;
  width: 221px;
  height: 22px;
  margin-left: 6px;
  background: #c0d0dd;
  border: 2px solid #7f9cb5;
  padding-left: 7px;
  font-size: 11px;
  line-height: 18px;
  color: #4a5f8c;
}
.blk-b .blk-box { margin-left: 5px; }
.blk-c .blk-box { margin-left: 0; width: 222px; }
.blk-box.is-sel {
  background: #fff;
  border: 2px dashed #3e94ff;
  padding-left: 0;
  color: #25356b;
}
.is-sel span { display: block; width: 51px; margin-top: 2px; line-height: 14px; background: #3e94ff; padding-left: 8px; box-sizing: border-box; white-space: nowrap; }
.blk-row {
  display: flex;
  gap: 9px;
  height: 30.5px;
  line-height: 30px;
  font-size: 10.7px;
  color: #f2f4f8;
  white-space: nowrap;
  -webkit-text-stroke: 0.2px #f2f4f8;
}
.blk-row:nth-child(2) { margin-top: 4px; }
.blk-row span { width: 110px; flex: none; }
.blk-row.shift { padding-left: 1px; }
.hscroll {
  position: absolute;
  left: 0;
  right: 0;
  bottom: 0;
  height: 8px;
  background: #ececec;
  border-top: 1px solid #d8d8d8;
}
.hscroll i {
  position: absolute;
  left: 231px;
  width: 389px;
  height: 8px;
  top: 0;
  background: #b8b8b8;
  border-radius: 4px;
}
.vscroll { width: 8px; flex: none; background: #ececec; padding-top: 108px; box-sizing: border-box; }
.vscroll i { height: 518px; background: #b8b8b8; border-radius: 4px; }

.rail {
  width: 39px;
  flex: none;
  background: #f5f5f5;
  box-sizing: border-box;
  display: flex;
  flex-direction: column;
  align-items: center;
  padding-top: 7px;
}
.rail-btn { width: 32px; height: 32px; flex: none; display: flex; align-items: center; justify-content: center; margin-bottom: 14px; }
.rail-btn .ic { width: 20px; height: 20px; }
.rail-btn.top { height: 26px; margin-bottom: 16px; }
.rail-btn.top .dbl { margin: 0; width: 18px; height: 18px; }
.rail-btn.active { background: #e4e4e4; }
.rail-btn.active .ic { width: 22px; height: 22px; }

.props {
  width: 281px;
  flex: none;
  box-sizing: border-box;
  border-left: 1px solid #e2e2e2;
  background: #f5f5f5;
}
.tabs { height: 32px; display: flex; background: #f5f5f5; color: #666; }
.tab { flex: 1; display: flex; align-items: center; justify-content: center; font-size: 13px; padding-bottom: 2px; background: #e4e4e4; }
.tab.on { background: #f5f5f5; color: #222; font-weight: 700; }
.tab.mid { border-bottom-left-radius: 6px; }
.fill-list { padding: 13px 0 0 20px; }
.radio-row { height: 30px; display: flex; align-items: center; gap: 6px; color: #333; }
.radio { width: 14px; height: 14px; margin-top: 1px; box-sizing: border-box; border-radius: 50%; border: 1px solid #ddd; background: #fff; position: relative; }
.radio.on { border-color: #3e94ff; }
.radio.on::after { content: ""; position: absolute; inset: 2px; border-radius: 50%; background: #3e94ff; }
.prop-row { display: flex; justify-content: space-between; align-items: center; padding: 0 20px; }
.color-row { margin-top: 15px; height: 22px; }
.swatch {
  box-sizing: border-box;
  width: 60px;
  height: 23px;
  background: #fff;
  border: 1px solid #e2e2e2;
  border-radius: 3px;
  padding: 3px;
}
.swatch i { height: 100%; background: #c0d0dd; border: 1px solid #adbfce; box-sizing: border-box; }
.prop-label { padding-left: 20px; height: 20px; line-height: 20px; color: #444; }
.l-a { margin-top: 15px; }
.l-b { margin-top: 13px; }
.slider-row { margin-top: 14px; height: 22px; }
.slider { width: 140px; height: 3px; background: #e6e6e6; position: relative; }
.fillbar { height: 3px; background: #0080ff; }
.knob {
  position: absolute;
  top: -5px;
  width: 13px;
  height: 13px;
  box-sizing: border-box;
  margin-left: -7px;
  border-radius: 50%;
  background: #fff;
  border: 2px solid #4a9bff;
}
.num {
  box-sizing: border-box;
  width: 60px;
  height: 23px;
  background: #fff;
  border: 1px solid #e2e2e2;
  border-radius: 3px;
  padding-left: 8px;
  line-height: 21px;
  color: #777;
}

.status {
  height: 35px;
  flex: none;
  box-sizing: border-box;
  border-top: 1px solid #e2e2e2;
  background: #f5f5f5;
  display: flex;
  align-items: center;
}
.st-pages { margin-left: 16px; width: 22px; height: 22px; stroke: #555; }
.st-page { margin-left: 25px; width: 39px; color: #666; }
.st-chev { margin-left: 41px; width: 12px; height: 12px; stroke: #6b86b8; }
.st-div { margin-left: 24px; width: 1px; height: 24px; background: #e2e2e2; }
.st-cur { margin-left: 14px; width: 40px; color: #222; }
.st-plus { margin-left: 24px; width: 14px; height: 14px; stroke: #555; }
.st-minus { margin-left: 955px; width: 14px; height: 14px; stroke: #555; }
.zoom-track { margin-left: 4px; width: 100px; height: 4px; background: #e0e0e0; position: relative; }
.zoom-dark { width: 21px; height: 4px; background: #b4b4b4; }
.zoom-knob {
  position: absolute;
  left: 16px;
  top: -4px;
  width: 12px;
  height: 12px;
  box-sizing: border-box;
  border: 2px solid #b4b4b4;
  background: #fff;
  border-radius: 50%;
}
.st-plus2 { margin-left: 4px; width: 14px; height: 14px; stroke: #555; }
.st-zoom { margin-left: 9px; width: 24px; color: #5b6f9c; }
.st-chev2 { margin-left: 1px; width: 12px; height: 12px; stroke: #6b86b8; }
.st-full { margin-left: 15px; width: 17px; height: 17px; stroke: #666; }
</style>

<style>
html, body { margin: 0; overflow: hidden; }
</style>
